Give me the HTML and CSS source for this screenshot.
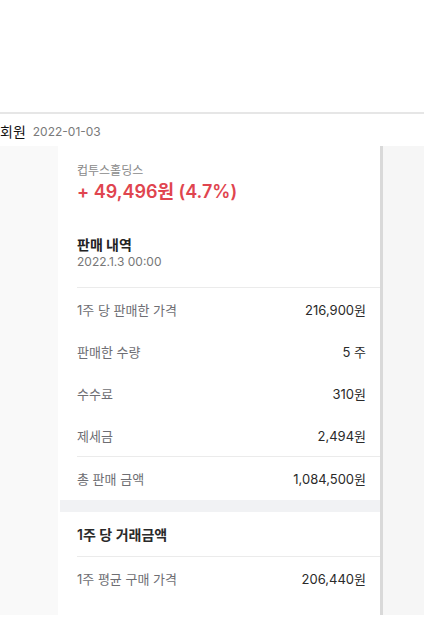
FILE: index.html
```html
<!DOCTYPE html>
<html lang="ko">
<head>
<meta charset="utf-8">
<link rel="stylesheet" href="styles.css">
</head>
<body>
<div class="topbar"></div>
<div class="titlebar"><span class="who">회원</span><span class="date">2022-01-03</span></div>
<div class="main">
  <div class="gutter"></div>
  <div class="card">
    <div class="summary">
      <div class="company">컵투스홀딩스</div>
      <div class="amount">+ 49,496원 (4.7%)</div>
      <div class="hist-title">판매 내역</div>
      <div class="hist-date">2022.1.3 00:00</div>
    </div>
    <div class="divider"></div>
    <div class="row"><span class="label">1주 당 판매한 가격</span><span class="value">216,900원</span></div>
    <div class="row"><span class="label">판매한 수량</span><span class="value">5 주</span></div>
    <div class="row"><span class="label">수수료</span><span class="value">310원</span></div>
    <div class="row"><span class="label">제세금</span><span class="value">2,494원</span></div>
    <div class="divider"></div>
    <div class="row"><span class="label">총 판매 금액</span><span class="value">1,084,500원</span></div>
    <div class="band"></div>
    <div class="section-title">1주 당 거래금액</div>
    <div class="divider"></div>
    <div class="row"><span class="label">1주 평균 구매 가격</span><span class="value">206,440원</span></div>
    <div class="row"><span class="label">1주 당 판매한 가격</span><span class="value">216,900원</span></div>
  </div>
  <div class="rail"></div>
</div>
</body>
</html>
```
FILE: styles.css
```css
* { box-sizing: border-box; }
html, body { margin: 0; padding: 0; }
body {
  width: 424px;
  height: 617px;
  overflow: hidden;
  background: #fff;
  font-family: Inter, "Noto Sans CJK KR", "Noto Sans", sans-serif;
}
.topbar {
  height: 114px;
  border-bottom: 2px solid #e6e6e6;
  background: #fff;
}
.titlebar {
  height: 32px;
  display: flex;
  align-items: center;
  gap: 7px;
  padding-top: 2px;
}
.who { font-size: 14px; color: #111; }
.date { font-size: 12px; color: #7a7a7a; }
.main {
  display: flex;
  height: 469px;
  overflow: hidden;
  background: #f6f6f6;
}
.gutter { width: 58px; background: #f9f9f9; }
.card {
  width: 322px;
  background: #fff;
  display: flex;
  flex-direction: column;
}
.card > * { flex-shrink: 0; }
.rail { width: 3px; background: #d9d9d9; }
.summary { padding: 16px 14px 0 19px; }
.company { font-size: 12px; line-height: 17px; height: 17px; color: #8a8a8a; }
.amount { font-size: 18px; line-height: 26px; height: 26px; font-weight: 600; color: #e0454f; }
.hist-title { margin-top: 31px; font-size: 14px; line-height: 18px; height: 18px; font-weight: 700; color: #222; }
.hist-date { font-size: 12px; line-height: 16px; height: 16px; color: #777; }
.divider { height: 1px; background: #ebebeb; margin-left: 19px; }
.summary + .divider { margin-top: 17px; }
.row {
  height: 42px;
  display: flex;
  align-items: center;
  justify-content: space-between;
  padding: 0 14px 0 19px;
  font-size: 13px;
}
.label { color: #6e6e73; }
.value { color: #2a2a2a; }
.band { height: 12px; background: #f1f2f4; margin: 1px 0 0 2px; }
.section-title {
  height: 44px;
  display: flex;
  align-items: center;
  padding-left: 19px;
  font-size: 14px;
  font-weight: 600;
  color: #2a2a2a;
}
```
